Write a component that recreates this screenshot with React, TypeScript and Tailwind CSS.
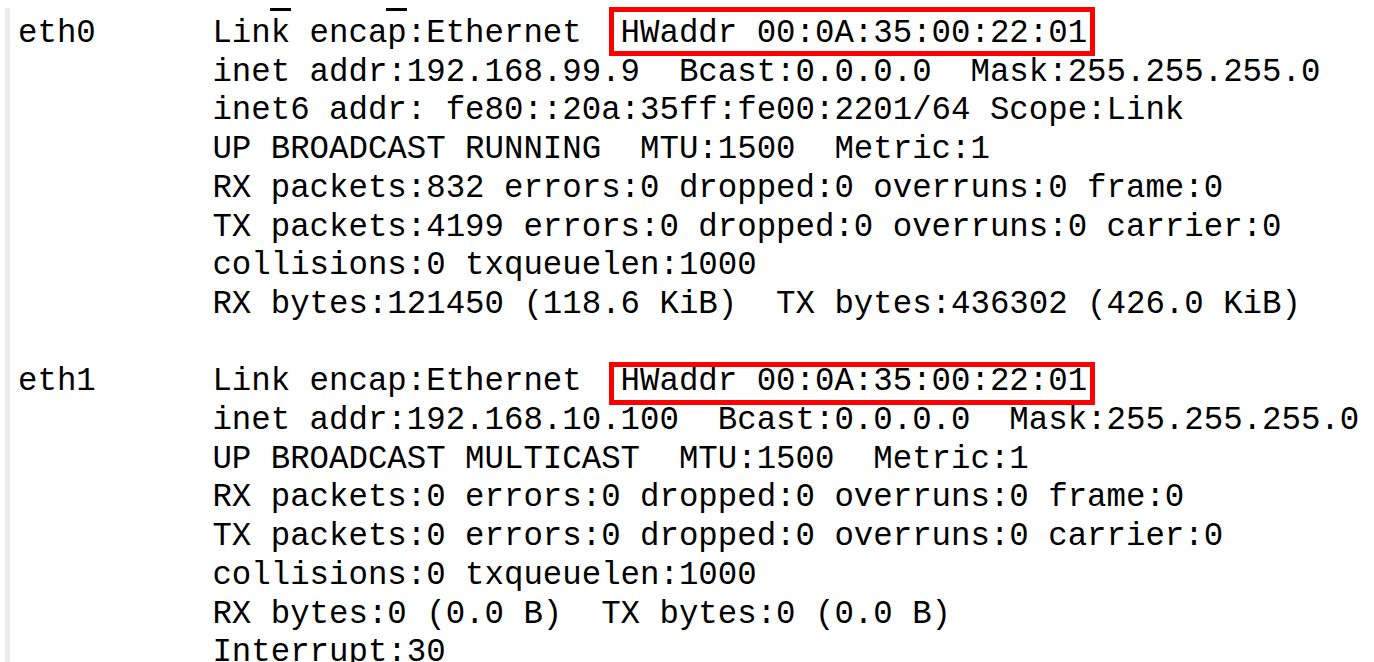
const eth0 = [
  'inet addr:192.168.99.9  Bcast:0.0.0.0  Mask:255.255.255.0',
  'inet6 addr: fe80::20a:35ff:fe00:2201/64 Scope:Link',
  'UP BROADCAST RUNNING  MTU:1500  Metric:1',
  'RX packets:832 errors:0 dropped:0 overruns:0 frame:0',
  'TX packets:4199 errors:0 dropped:0 overruns:0 carrier:0',
  'collisions:0 txqueuelen:1000',
  'RX bytes:121450 (118.6 KiB)  TX bytes:436302 (426.0 KiB)',
]

const eth1 = [
  'inet addr:192.168.10.100  Bcast:0.0.0.0  Mask:255.255.255.0',
  'UP BROADCAST MULTICAST  MTU:1500  Metric:1',
  'RX packets:0 errors:0 dropped:0 overruns:0 frame:0',
  'TX packets:0 errors:0 dropped:0 overruns:0 carrier:0',
  'collisions:0 txqueuelen:1000',
  'RX bytes:0 (0.0 B)  TX bytes:0 (0.0 B)',
  'Interrupt:30',
]

function Iface({ name, lines, boxClass }: { name: string; lines: string[]; boxClass: string }) {
  return (
    <div>
      <div>
        {name.padEnd(10, ' ')}Link encap:Ethernet{'  '}
        <span className="relative inline-block">
          HWaddr 00:0A:35:00:22:01
          <span className={`absolute left-[-12px] right-[-8px] border-[5px] border-[#ff0000] ${boxClass}`} />
        </span>
      </div>
      {lines.map((l, i) => (
        <div key={i}>{' '.repeat(10)}{l}</div>
      ))}
    </div>
  )
}

export default function App() {
  return (
    <div className="w-[1374px] h-[662px] overflow-hidden bg-white flex">
      <div className="ml-[5px] mt-[8px] w-[5px] bg-[#ececec] shrink-0" />
      <div className="relative pl-[8px] pt-[15px] whitespace-pre text-black font-['Liberation_Mono','Courier_New',monospace] text-[32.4px] leading-[38.7px]">
        <div className="absolute top-[8px] left-[8px] flex h-[3px]">
          <div className="ml-[252px] w-[21px] bg-black" />
          <div className="ml-[95px] w-[21px] bg-black" />
        </div>
        <Iface name="eth0" lines={eth0} boxClass="top-[-8px] bottom-[-2px]" />
        <div>{' '}</div>
        <Iface name="eth1" lines={eth1} boxClass="top-[-1px] bottom-[-3px]" />
      </div>
    </div>
  )
}
